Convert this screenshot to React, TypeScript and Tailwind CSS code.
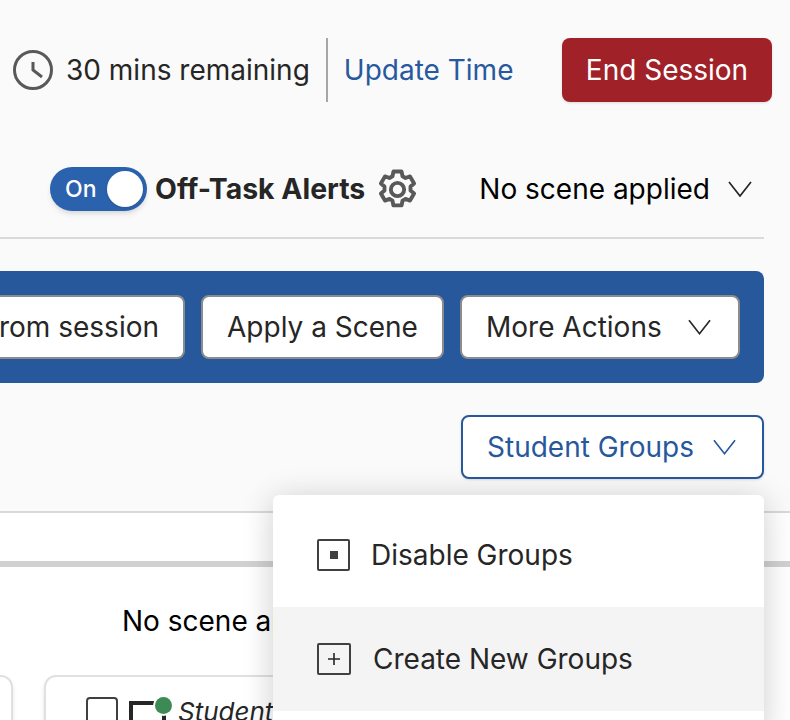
import React from "react";

const sans = "font-['Inter','Liberation_Sans',sans-serif]";

function Chevron({ className }: { className: string }) {
  return (
    <svg viewBox="0 0 24 16" fill="none" stroke="currentColor" strokeWidth="1.7" className={className}>
      <path d="M1 1 L12 15 L23 1" />
    </svg>
  );
}

function Gear() {
  return (
    <svg viewBox="0 0 40 40" fill="none" stroke="#595959" strokeWidth="3.8" strokeLinejoin="round" className="w-[41px] h-[41px]">
      <path d="M16 2.5h8l.9 4.6 2.9 1.7 4.4-1.6 4 6.9-3.5 3 0 3.8 3.5 3-4 6.9-4.4-1.6-2.9 1.7-.9 4.6h-8l-.9-4.6-2.9-1.7-4.4 1.6-4-6.9 3.5-3 0-3.8-3.5-3 4-6.9 4.4 1.6 2.9-1.7z" />
      <circle cx="20" cy="20" r="6.5" />
    </svg>
  );
}

export default function App() {
  return (
    <div className={`${sans} relative w-[790px] h-[720px] overflow-hidden bg-[#fafafa] text-[#262626]`}>
      <div className="flex flex-col items-end pr-[18px] pt-[38px]">
        <div className="flex items-center h-16 w-[772px]">
          <svg viewBox="0 0 40 40" fill="none" stroke="#595959" className="ml-[13px] w-10 h-10">
            <circle cx="20" cy="20" r="18.5" strokeWidth="3" />
            <path d="M20 12 V20 L29 27" strokeWidth="3" />
          </svg>
          <span className="ml-[13px] text-[28px] leading-8 whitespace-nowrap">30 mins remaining</span>
          <span className="ml-[16px] w-0.5 h-16 bg-[#a6a6a6]" />
          <a className="ml-4 text-[28px] leading-8 text-[#27599e] whitespace-nowrap">Update Time</a>
          <button className="ml-auto w-[210px] h-16 rounded-lg bg-[#a02128] text-white text-[28px] shadow-sm">End Session</button>
        </div>

        <div className="flex items-center h-[50px] w-[772px] mt-[62px]">
          <div className="relative ml-[50px] w-[97px] h-11 rounded-full bg-[#2b62ae] text-white text-[23px] font-medium flex items-center pl-[15px] shadow-md">
            On
            <span className="absolute right-[4px] top-[4px] w-9 h-9 rounded-full bg-white shadow" />
          </div>
          <span className="ml-2 text-[28.4px] font-bold whitespace-nowrap">Off-Task Alerts</span>
          <span className="ml-3 flex"><Gear /></span>
          <span className="ml-[61px] text-[28px] text-black whitespace-nowrap">No scene applied</span>
          <Chevron className="ml-[18px] w-6 h-4 text-[#262626]" />
        </div>

        <div className="w-[764px] mr-[8px] mt-[23px] h-0.5 bg-[#d9d9d9]" />

        <div className="w-[764px] mr-[8px] mt-[32px] h-[112px] rounded-r-lg bg-[#27589c] flex items-center justify-end pr-6 gap-4">
          <button className="w-[200px] -ml-4 h-16 rounded-r-lg bg-white border-2 border-[#8c8c8c] border-l-0 text-[28px] text-right pr-6 whitespace-nowrap">rom session</button>
          <button className="w-[243px] h-16 rounded-lg bg-white border-2 border-[#8c8c8c] text-[28px] whitespace-nowrap">Apply a Scene</button>
          <button className="w-[280px] h-16 rounded-lg bg-white border-2 border-[#8c8c8c] text-[28px] whitespace-nowrap flex items-center pl-6">
            More Actions
            <Chevron className="ml-[26px] w-[23px] h-4" />
          </button>
        </div>

        <button className="mr-[8px] mt-[32px] w-[303px] h-16 rounded-lg bg-white border-2 border-[#27589c] text-[#27589c] text-[28px] whitespace-nowrap flex items-center pl-6 shadow-sm">
          Student Groups
          <Chevron className="ml-[19px] w-[23px] h-4" />
        </button>
      </div>

      <div className="absolute left-0 top-[511px] w-[790px] h-[210px] bg-white border-t-2 border-[#d9d9d9]">
        <div className="mt-[48px] h-1.5 bg-[#d1d1d1]" />
        <p className="ml-[122px] mt-[38px] text-[28px] leading-8 text-black whitespace-nowrap">No scene applied</p>
        <div className="absolute -left-[40px] top-[162px] w-[53px] h-[60px] rounded-xl bg-white border-2 border-[#e0e0e0] shadow-md" />
        <div className="absolute left-[44px] top-[162px] w-[260px] h-[60px] rounded-t-xl bg-white border-2 border-[#e0e0e0] shadow-md">
          <span className="absolute left-[40px] top-[20px] w-8 h-8 rounded-sm border-2 border-[#404040] bg-white" />
          <span className="absolute left-[83px] top-[24px] w-[37px] h-8 border-[4px] border-[#262626] bg-white" />
          <span className="absolute left-[109px] top-[20px] w-[17px] h-[17px] rounded-full bg-[#3d8a55] ring-2 ring-white" />
          <span className="absolute left-[132px] top-[21px] italic text-[26px] leading-7 whitespace-nowrap">Student</span>
        </div>
      </div>

      <div className="absolute left-[273px] top-[495px] w-[491px] h-[240px] rounded-t-md bg-white shadow-[0_4px_32px_rgba(0,0,0,0.2)]">
        <div className="h-[112px] flex items-center pl-[44px] pt-2">
          <span className="w-[33px] h-[32px] rounded-[2px] border-2 border-[#404040] flex items-center justify-center">
            <span className="w-2 h-2 bg-[#404040]" />
          </span>
          <span className="ml-[21px] text-[28px] whitespace-nowrap">Disable Groups</span>
        </div>
        <div className="h-[104px] bg-[#f4f4f4] flex items-center pl-[44px]">
          <span className="w-[34px] h-8 rounded-[2px] border-2 border-[#404040] flex items-center justify-center">
            <svg viewBox="0 0 12 12" stroke="#262626" strokeWidth="1.6" className="w-3 h-3"><path d="M6 0V12M0 6H12" /></svg>
          </span>
          <span className="ml-[22px] text-[28px] whitespace-nowrap">Create New Groups</span>
        </div>
      </div>
    </div>
  );
}
